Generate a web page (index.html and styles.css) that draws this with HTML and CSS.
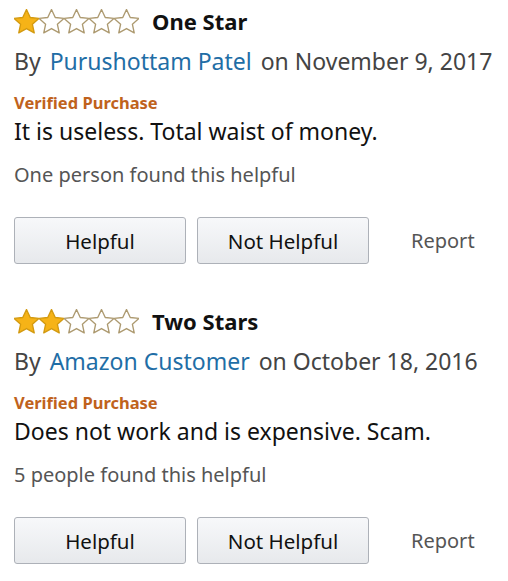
FILE: index.html
```html
<!DOCTYPE html>
<html lang="en">
<head>
    <meta charset="UTF-8">
    <meta name="viewport" content="width=device-width, initial-scale=1.0">
    <title>Customer Reviews</title>
    <link rel="stylesheet" href="styles.css">
</head>
<body>
    <div class="review">
        <div class="review-head">
            <div class="stars">
                <svg class="star full" viewBox="1 1 22 22"><path d="M12 1.5l3.3 7 7.6.8-5.7 5.2 1.6 7.5L12 18.2l-6.8 3.8 1.6-7.5-5.7-5.2 7.6-.8z"/></svg>
                <svg class="star" viewBox="1 1 22 22"><path d="M12 1.5l3.3 7 7.6.8-5.7 5.2 1.6 7.5L12 18.2l-6.8 3.8 1.6-7.5-5.7-5.2 7.6-.8z"/></svg>
                <svg class="star" viewBox="1 1 22 22"><path d="M12 1.5l3.3 7 7.6.8-5.7 5.2 1.6 7.5L12 18.2l-6.8 3.8 1.6-7.5-5.7-5.2 7.6-.8z"/></svg>
                <svg class="star" viewBox="1 1 22 22"><path d="M12 1.5l3.3 7 7.6.8-5.7 5.2 1.6 7.5L12 18.2l-6.8 3.8 1.6-7.5-5.7-5.2 7.6-.8z"/></svg>
                <svg class="star" viewBox="1 1 22 22"><path d="M12 1.5l3.3 7 7.6.8-5.7 5.2 1.6 7.5L12 18.2l-6.8 3.8 1.6-7.5-5.7-5.2 7.6-.8z"/></svg>
            </div>
            <span class="title">One Star</span>
        </div>
        <div class="byline">By <a href="#" class="author">Purushottam Patel</a> on November 9, 2017</div>
        <div class="verified">Verified Purchase</div>
        <p class="body-text">It is useless. Total waist of money.</p>
        <div class="helpful-count">One person found this helpful</div>
        <div class="actions">
            <button type="button" class="vote">Helpful</button>
            <button type="button" class="vote">Not Helpful</button>
            <a href="#" class="report">Report</a>
        </div>
    </div>

    <div class="review">
        <div class="review-head">
            <div class="stars">
                <svg class="star full" viewBox="1 1 22 22"><path d="M12 1.5l3.3 7 7.6.8-5.7 5.2 1.6 7.5L12 18.2l-6.8 3.8 1.6-7.5-5.7-5.2 7.6-.8z"/></svg>
                <svg class="star full" viewBox="1 1 22 22"><path d="M12 1.5l3.3 7 7.6.8-5.7 5.2 1.6 7.5L12 18.2l-6.8 3.8 1.6-7.5-5.7-5.2 7.6-.8z"/></svg>
                <svg class="star" viewBox="1 1 22 22"><path d="M12 1.5l3.3 7 7.6.8-5.7 5.2 1.6 7.5L12 18.2l-6.8 3.8 1.6-7.5-5.7-5.2 7.6-.8z"/></svg>
                <svg class="star" viewBox="1 1 22 22"><path d="M12 1.5l3.3 7 7.6.8-5.7 5.2 1.6 7.5L12 18.2l-6.8 3.8 1.6-7.5-5.7-5.2 7.6-.8z"/></svg>
                <svg class="star" viewBox="1 1 22 22"><path d="M12 1.5l3.3 7 7.6.8-5.7 5.2 1.6 7.5L12 18.2l-6.8 3.8 1.6-7.5-5.7-5.2 7.6-.8z"/></svg>
            </div>
            <span class="title">Two Stars</span>
        </div>
        <div class="byline">By <a href="#" class="author">Amazon Customer</a> on October 18, 2016</div>
        <div class="verified">Verified Purchase</div>
        <p class="body-text">Does not work and is expensive. Scam.</p>
        <div class="helpful-count">5 people found this helpful</div>
        <div class="actions">
            <button type="button" class="vote">Helpful</button>
            <button type="button" class="vote">Not Helpful</button>
            <a href="#" class="report">Report</a>
        </div>
    </div>
</body>
</html>
```

FILE: styles.css
```css
body {
    font-family: "Noto Sans", Arial, sans-serif;
    background-color: #fff;
    color: #111;
    margin: 0;
}
.review {
    padding: 0 14px;
    height: 300px;
}
.review-head {
    display: flex;
    align-items: center;
    height: 42px;
}
.stars {
    display: flex;
    width: 138px;
}
.star {
    width: 25px;
    height: 25px;
    fill: #fff;
    stroke: #ad9a70;
    stroke-width: 1.2;
    stroke-linejoin: round;
}
.star.full {
    fill: #f6b317;
    stroke: #d39a10;
}
.title {
    font-size: 22px;
    font-weight: bold;
}
.byline {
    font-size: 23px;
    line-height: 38px;
    color: #444;
    white-space: nowrap;
}
.author {
    color: #1f6ea6;
    text-decoration: none;
    margin: 0 3px;
}
.verified {
    margin-top: 11px;
    font-size: 16.5px;
    font-weight: bold;
    line-height: 24px;
    color: #c0621c;
}
.body-text {
    margin: 0;
    font-size: 23px;
    line-height: 32px;
}
.helpful-count {
    margin-top: 14px;
    font-size: 20px;
    line-height: 28px;
    color: #555;
}
.actions {
    display: flex;
    align-items: center;
    margin-top: 28px;
}
.vote {
    width: 172px;
    height: 47px;
    margin-right: 11px;
    border: 1px solid #adb1b8;
    border-radius: 3px;
    background: linear-gradient(#f7f8fa, #e7e9ec);
    font-family: inherit;
    font-size: 20.5px;
    color: #111;
}
.report {
    margin-left: 31px;
    font-size: 20px;
    color: #555;
    text-decoration: none;
}
```
